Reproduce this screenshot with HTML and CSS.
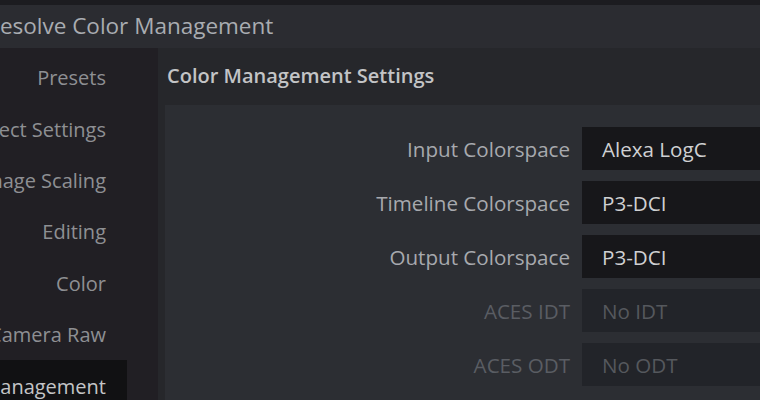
FILE: index.html
```html
<!DOCTYPE html>
<html lang="en">
<head>
<meta charset="utf-8">
<link rel="stylesheet" href="styles.css">
</head>
<body>
<div class="window">
  <div class="titlebar"><span class="title">Resolve Color Management</span></div>
  <div class="body">
    <nav class="sidebar">
      <div class="nav-item">Presets</div>
      <div class="nav-item">Project Settings</div>
      <div class="nav-item">Image Scaling</div>
      <div class="nav-item">Editing</div>
      <div class="nav-item">Color</div>
      <div class="nav-item">Camera Raw</div>
      <div class="nav-item active">Color Management</div>
    </nav>
    <main class="main">
      <h2 class="section-title">Color Management Settings</h2>
      <div class="panel">
        <div class="row"><span class="label">Input Colorspace</span><span class="value">Alexa LogC</span></div>
        <div class="row"><span class="label">Timeline Colorspace</span><span class="value">P3-DCI</span></div>
        <div class="row"><span class="label">Output Colorspace</span><span class="value">P3-DCI</span></div>
        <div class="row disabled"><span class="label">ACES IDT</span><span class="value">No IDT</span></div>
        <div class="row disabled"><span class="label">ACES ODT</span><span class="value">No ODT</span></div>
      </div>
    </main>
  </div>
</div>
</body>
</html>
```
FILE: styles.css
```css
* { box-sizing: border-box; }
html, body { margin: 0; padding: 0; }
body {
  width: 760px;
  height: 400px;
  overflow: hidden;
  background: #26272b;
  font-family: "Open Sans", "Noto Sans", sans-serif;
}
.window { display: flex; flex-direction: column; height: 400px; }
.titlebar {
  height: 48px;
  flex: none;
  background: #2b2c31;
  border-top: 5px solid #1c1c20;
  display: flex;
  align-items: center;
  padding-bottom: 2px;
  overflow: hidden;
}
.title {
  margin-left: -14px;
  font-size: 22.5px;
  color: #a9acb1;
  white-space: nowrap;
}
.body { flex: 1; display: flex; min-height: 0; }
.sidebar {
  width: 158px;
  flex: none;
  background: #211f24;
  padding-top: 4px;
  overflow: hidden;
}
.nav-item {
  width: 127px;
  height: 51.4px;
  display: flex;
  align-items: center;
  justify-content: flex-end;
  padding-right: 21px;
  font-size: 20px;
  color: #8e8f93;
  white-space: nowrap;
}
.nav-item.active { background: #111113; color: #c4c5c7; }
.main { flex: 1; display: flex; flex-direction: column; padding-left: 7px; min-width: 0; }
.section-title {
  margin: 0;
  height: 57px;
  display: flex;
  align-items: center;
  padding-left: 2px;
  padding-bottom: 2px;
  font-size: 20px;
  font-weight: 600;
  color: #c3c4c6;
  white-space: nowrap;
}
.panel {
  flex: 1;
  background: #2c2e33;
  padding-top: 22px;
  display: flex;
  flex-direction: column;
  gap: 11px;
}
.row { display: flex; align-items: stretch; height: 43px; gap: 12px; }
.label {
  width: 405px;
  display: flex;
  align-items: center;
  justify-content: flex-end;
  font-size: 20.6px;
  color: #a7a9ae;
  white-space: nowrap;
}
.value {
  flex: 1;
  background: #17171a;
  display: flex;
  align-items: center;
  padding-left: 20px;
  font-size: 20.6px;
  color: #cfd0d2;
  white-space: nowrap;
}
.row.disabled .label { color: #5a5d63; }
.row.disabled .value { background: #222429; color: #55585d; }
```
